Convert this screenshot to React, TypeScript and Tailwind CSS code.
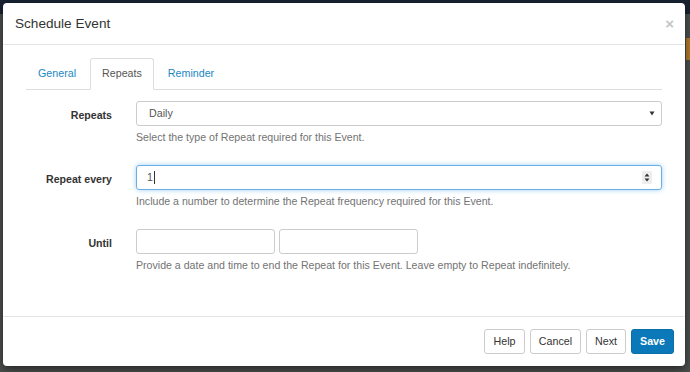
import React from 'react';

const font = { fontFamily: '"Liberation Sans", Arial, sans-serif' };

const Help = ({ children }: { children: React.ReactNode }) => (
  <p className="mt-[3px] text-[10.6px] leading-[16px] text-[#737373]">{children}</p>
);

const Row = ({ label, children }: { label: string; children: React.ReactNode }) => (
  <div className="flex">
    <div className="w-[86px] shrink-0 pt-[6px] text-right text-[10.6px] font-bold leading-[16px] text-[#333]">{label}</div>
    <div className="ml-[24px] flex-1">{children}</div>
  </div>
);

const Spinner = () => (
  <div className="flex h-[13px] w-[10px] items-center justify-center rounded-[1px] bg-[#eeeeee]">
    <svg width="6" height="9" viewBox="0 0 6 9">
      <path d="M3 0.5 L5.5 3.5 H0.5 Z" fill="#333" />
      <path d="M3 8.5 L5.5 5.5 H0.5 Z" fill="#333" />
    </svg>
  </div>
);

export default function App() {
  return (
    <div className="relative h-[372px] w-[690px] overflow-hidden bg-[#4a4e4d]" style={font}>
      <div className="h-[14px] bg-[#182232]" />
      <div className="absolute right-0 top-[38px] h-[22px] w-[4px] bg-[#b07a28]" />
      <div className="absolute left-[3px] top-[3px] flex h-[363px] w-[682px] flex-col rounded-[4px] bg-white shadow-[0_3px_9px_rgba(0,0,0,0.5)]">
        <div className="flex h-[42px] items-center justify-between border-b border-[#e5e5e5] pl-[12px] pr-[11px]">
          <h4 className="pt-[1px] text-[13.6px] leading-[18px] text-[#333]">Schedule Event</h4>
          <span className="text-[15px] font-bold leading-none text-[#c4c4c4]">×</span>
        </div>

        <div className="flex-1 px-[23px] pt-[13px]">
          <div className="flex border-b border-[#dddddd] pl-0 text-[10.7px] leading-[16px]">
            <div className="mb-[-1px] mr-[2px] px-[12px] py-[7px] text-[#1a87c5]">General</div>
            <div className="mb-[-1px] mr-[2px] rounded-t-[3px] border border-b-white border-[#dddddd] bg-white px-[11px] py-[6px] pb-[8px] text-[#555]">Repeats</div>
            <div className="mb-[-1px] px-[12px] py-[7px] text-[#1a87c5]">Reminder</div>
          </div>

          <div className="mt-[11px] flex flex-col gap-[20px]">
            <Row label="Repeats">
              <div className="flex h-[25px] items-center justify-between rounded-[3px] border border-[#cccccc] pl-[12px] pr-[6px] text-[10.7px] text-[#555]">
                <span>Daily</span>
                <svg width="6" height="5" viewBox="0 0 6 5">
                  <path d="M0.5 0.5 H5.5 L3 4.5 Z" fill="#333" />
                </svg>
              </div>
              <Help>Select the type of Repeat required for this Event.</Help>
            </Row>

            <Row label="Repeat every">
              <div className="flex h-[25px] items-center justify-between rounded-[3px] border border-[#66afe9] pl-[10px] pr-[9px] text-[10.7px] text-[#555] shadow-[0_0_5px_rgba(102,175,233,0.6)]">
                <span className="flex items-center">
                  1<span className="ml-[1px] inline-block h-[13px] w-px bg-[#333]" />
                </span>
                <Spinner />
              </div>
              <Help>Include a number to determine the Repeat frequency required for this Event.</Help>
            </Row>

            <Row label="Until">
              <div className="flex gap-[4px]">
                <div className="h-[25px] w-[139px] rounded-[3px] border border-[#cccccc]" />
                <div className="h-[25px] w-[139px] rounded-[3px] border border-[#cccccc]" />
              </div>
              <Help>Provide a date and time to end the Repeat for this Event. Leave empty to Repeat indefinitely.</Help>
            </Row>
          </div>
        </div>

        <div className="flex h-[50px] items-center justify-end gap-[5px] border-t border-[#e5e5e5] pr-[11px] pb-[1px] text-[10.7px]">
          <button className="h-[25px] w-[41px] rounded-[3px] border border-[#cccccc] bg-white text-[#333]">Help</button>
          <button className="h-[25px] w-[51px] rounded-[3px] border border-[#cccccc] bg-white text-[#333]">Cancel</button>
          <button className="h-[25px] w-[40px] rounded-[3px] border border-[#cccccc] bg-white text-[#333]">Next</button>
          <button className="h-[25px] w-[43px] rounded-[3px] border border-[#0a6fa8] bg-[#0a78b9] font-bold text-white">Save</button>
        </div>
      </div>
    </div>
  );
}
